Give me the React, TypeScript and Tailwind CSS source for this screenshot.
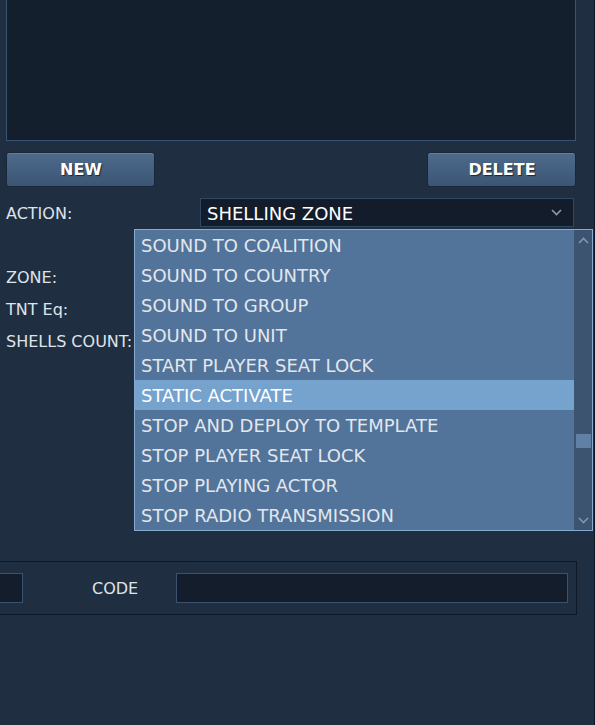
import React from 'react';

const items = [
  'SOUND TO COALITION',
  'SOUND TO COUNTRY',
  'SOUND TO GROUP',
  'SOUND TO UNIT',
  'START PLAYER SEAT LOCK',
  'STATIC ACTIVATE',
  'STOP AND DEPLOY TO TEMPLATE',
  'STOP PLAYER SEAT LOCK',
  'STOP PLAYING ACTOR',
  'STOP RADIO TRANSMISSION',
];

const Chevron: React.FC<{ up?: boolean; color: string }> = ({ up, color }) => (
  <svg width="11" height="7" viewBox="0 0 11 7" fill="none">
    <path d={up ? 'M1 6 L5.5 1.5 L10 6' : 'M1 1 L5.5 5.5 L10 1'} stroke={color} strokeWidth="1.6" />
  </svg>
);

const Button: React.FC<{ label: string }> = ({ label }) => (
  <button className="w-[149px] h-[35px] rounded-[3px] border border-[#1a2738] bg-gradient-to-b from-[#4e6b8c] to-[#3b5574] shadow-[inset_0_1px_0_rgba(255,255,255,0.12)] text-white font-bold text-[16px] pl-[1px] [text-shadow:1px_1px_1px_rgba(0,0,0,0.6)]">
    {label}
  </button>
);

const App: React.FC = () => {
  return (
    <div className="relative w-[595px] h-[725px] overflow-hidden bg-[#1f2e41] border-r border-[#0f1722] font-['DejaVu_Sans',sans-serif] text-[#dfe4ea]">
      <div className="ml-[6px] w-[570px] h-[141px] border-x border-b border-[#3a546f] bg-[#141f2e]" />

      <div className="mt-[11px] ml-[6px] w-[570px] flex justify-between">
        <Button label="NEW" />
        <Button label="DELETE" />
      </div>

      <div className="mt-[11px] ml-[6px] flex items-center h-[29px]">
        <div className="w-[194px] pt-[2px] text-[16px]">ACTION:</div>
        <div className="w-[374px] h-[29px] border border-[#304761] bg-[#121c2a] flex items-center justify-between pl-[6px] pr-[11px]">
          <span className="text-[18px] text-white pt-[1px]">SHELLING ZONE</span>
          <Chevron color="#8a9bb0" />
        </div>
      </div>

      <div className="mt-[35px] ml-[6px] text-[16px]">
        <div className="h-[32px] flex items-center">ZONE:</div>
        <div className="h-[32px] flex items-center">TNT Eq:</div>
        <div className="h-[32px] flex items-center">SHELLS COUNT:</div>
      </div>

      <div className="mt-[203px] -ml-[2px] w-[579px] h-[54px] border border-[#101925] flex items-center">
        <div className="-ml-[20px] w-[44px] h-[30px] border border-[#3b536e] bg-[#131d2b]" />
        <div className="ml-[69px] pt-[2px] text-[16px]">CODE</div>
        <div className="ml-[38px] w-[392px] h-[30px] border border-[#3b536e] bg-[#131d2b]" />
      </div>

      <div className="absolute left-[134px] top-[229px] w-[459px] h-[302px] border border-[#86aad2] bg-[#52739a] flex">
        <div className="w-[439px] flex flex-col">
          {items.map((it) => (
            <div
              key={it}
              className={
                it === 'STATIC ACTIVATE'
                  ? 'h-[30px] flex items-center pl-[6px] text-[18px] text-white bg-[#76a2ce]'
                  : 'h-[30px] flex items-center pl-[6px] text-[18px] text-[#e2e7ed]'
              }
            >
              {it}
            </div>
          ))}
        </div>
        <div className="w-[18px] bg-[#3d5470] flex flex-col items-center">
          <div className="mt-[7px]">
            <Chevron up color="#7f97b4" />
          </div>
          <div className="mt-[190px] ml-[1px] w-[15px] h-[14px] bg-[#6080a6]" />
          <div className="mt-[69px]">
            <Chevron color="#7f97b4" />
          </div>
        </div>
      </div>
    </div>
  );
};

export default App;
